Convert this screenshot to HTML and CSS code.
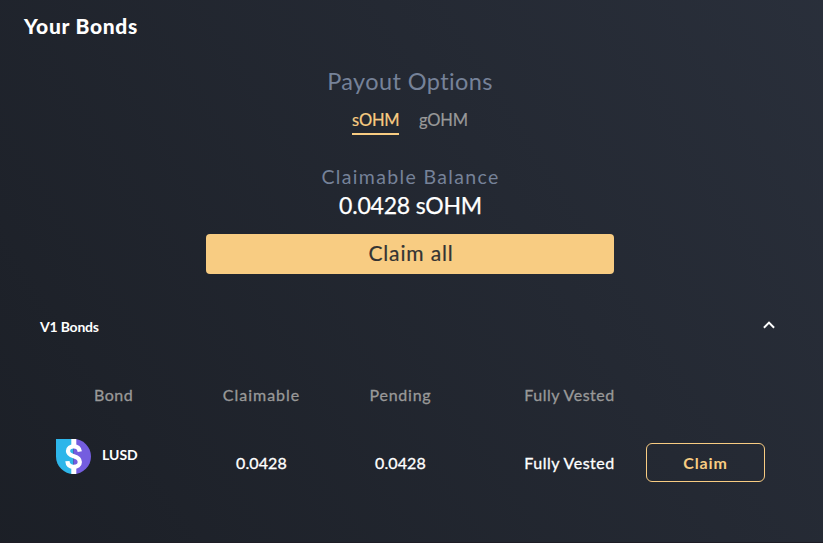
FILE: index.html
```html
<!DOCTYPE html>
<html lang="en">
<head>
<meta charset="utf-8">
<title>Your Bonds</title>
<link rel="stylesheet" href="styles.css">
</head>
<body>
<main class="card">
  <h1 class="title">Your Bonds</h1>
  <section class="payout">
    <h2 class="payout-title">Payout Options</h2>
    <nav class="tabs">
      <a class="tab tab-active">sOHM</a>
      <a class="tab">gOHM</a>
    </nav>
    <div class="label">Claimable Balance</div>
    <div class="balance">0.0428 sOHM</div>
    <button class="claim-all">Claim all</button>
  </section>
  <section class="bonds">
    <div class="bonds-head">
      <span class="bonds-name">V1 Bonds</span>
      <svg class="chevron" width="14" height="10" viewBox="0 0 14 10"><path d="M1.9 7.7 7 2.6l5.1 5.1" fill="none" stroke="#fff" stroke-width="2"/></svg>
    </div>
    <div class="row row-head">
      <span class="h-bond">Bond</span><span class="h-claimable">Claimable</span><span class="h-pending">Pending</span><span class="vested">Fully Vested</span>
    </div>
    <div class="row row-data">
      <div class="bond">
        <svg width="35" height="35" viewBox="0 0 35 35">
          <path d="M0 0h17.5v35A17.5 17.5 0 0 1 0 17.5z" fill="#2eb6ea"/>
          <path d="M17.5 0a17.5 17.5 0 0 1 0 35z" fill="#745ddf"/>
          <path d="M15.3 0h5v7h-5zM15.3 28h5v7h-5z" fill="#fff"/>
          <path d="M23.8 12.6c-.5-3.4-2.8-5.2-6-5.2-3.5 0-5.8 1.9-5.8 4.6 0 3.2 2.7 4.3 5.8 5.3 3.5 1.1 6 2.4 6 5.7 0 3-2.5 4.9-6 4.9-3.8 0-6.1-2-6.4-5.8" fill="none" stroke="#fff" stroke-width="4.3"/>
        </svg>
        <span class="symbol">LUSD</span>
      </div>
      <span class="num">0.0428</span><span class="num">0.0428</span><span class="vested">Fully Vested</span>
      <button class="claim">Claim</button>
    </div>
  </section>
</main>
</body>
</html>
```
FILE: styles.css
```css
* { box-sizing: border-box; }
body { margin: 0; background: #1b1c22; font-family: Lato, "Open Sans", sans-serif; color: #fff; }
button { font: inherit; padding: 0; }
.card { height: 543px; border-bottom: 1px solid #1d1c25; background: linear-gradient(237.43deg, #2b313d -12.81%, #171a20 132.72%); overflow: hidden; }
.title { margin: 12px 0 0 24px; height: 29px; line-height: 28px; font-size: 21px; font-weight: 900; letter-spacing: .7px; }
.payout { width: 408px; margin: 24px 0 0 206px; display: flex; flex-direction: column; align-items: center; text-align: center; white-space: nowrap; }
.payout-title { margin: 0; height: 32px; line-height: 32px; font-size: 23.5px; font-weight: 400; letter-spacing: .4px; color: #768299; }
.tabs { display: flex; gap: 20px; margin-top: 11px; height: 27px; }
.tab { height: 27px; line-height: 24px; font-size: 16.5px; letter-spacing: -.2px; color: #999; -webkit-text-stroke: .2px; }
.tab-active { color: #f8cc82; border-bottom: 2px solid #f8cc82; width: 47px; }
.label { margin-top: 28px; height: 28px; line-height: 28px; padding-left: 1px; font-size: 19.5px; letter-spacing: 1.35px; color: #768299; }
.balance { height: 29px; line-height: 28px; padding-left: 1px; font-size: 23px; letter-spacing: -.2px; -webkit-text-stroke: .25px; }
.claim-all { margin-top: 14px; width: 408px; height: 40px; border: 0; border-radius: 4px; background: #f8cc82; color: #333; padding: 0 0 2px 2px; font-size: 21px; letter-spacing: .85px; line-height: 38px; -webkit-text-stroke: .2px; }
.bonds { margin: 42px 48px 0 40px; white-space: nowrap; }
.bonds-head { display: flex; justify-content: space-between; height: 22px; line-height: 22px; font-size: 14px; font-weight: 700; letter-spacing: -.2px; }
.chevron { margin: 4px -1px 0 0; }
.row { display: grid; grid-template-columns: 146px 150px 128px 210px 101px; font-size: 16px; -webkit-text-stroke: .3px; }
.row > span { text-align: center; padding-left: 1px; }
.row-head { margin-top: 45px; height: 25px; line-height: 24px; color: #999; }
.h-bond { letter-spacing: .5px; }
.h-claimable { letter-spacing: 1px; }
.h-pending { letter-spacing: .75px; }
.vested { letter-spacing: .5px; }
.num { letter-spacing: .1px; }
.row-data { margin-top: 31px; height: 48px; line-height: 48px; }
.bond { display: flex; margin-left: 16px; gap: 11px; -webkit-text-stroke: 0; }
.bond svg { flex: none; }
.symbol { line-height: 32px; font-size: 14px; font-weight: 700; }
.claim { width: 119px; height: 39px; margin-top: 4px; margin-left: -28px; border: 1px solid #f8cc82; border-radius: 6px; background: none; color: #f8cc82; font-size: 16px; font-weight: 700; letter-spacing: .9px; line-height: 37px; -webkit-text-stroke: 0; }
```
